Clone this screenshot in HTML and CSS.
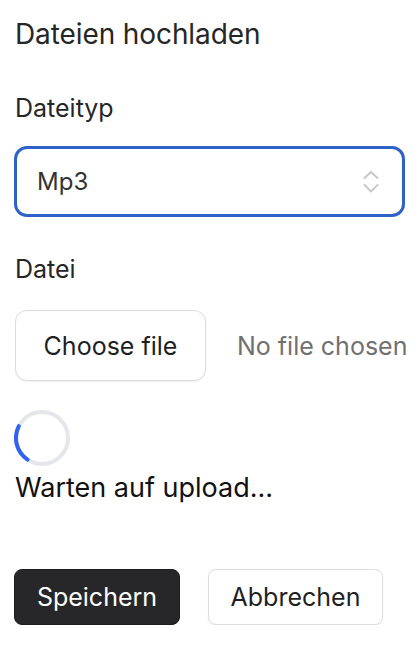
FILE: index.html
```html
<!DOCTYPE html>
<html lang="de">
<head>
<meta charset="utf-8">
<link rel="stylesheet" href="styles.css">
</head>
<body>
<div class="page">
  <h1 class="title">Dateien hochladen</h1>
  <label class="label label-type">Dateityp</label>
  <div class="select">
    <span class="select-value">Mp3</span>
    <svg class="chev" width="16" height="24" viewBox="0 0 16 24"><path d="M1.5 8 L8 2 L14.5 8" fill="none" stroke="#c8c8c8" stroke-width="2" stroke-linecap="round" stroke-linejoin="round"/><path d="M1.5 15 L8 21.5 L14.5 15" fill="none" stroke="#c8c8c8" stroke-width="2" stroke-linecap="round" stroke-linejoin="round"/></svg>
  </div>
  <label class="label label-file">Datei</label>
  <div class="file-row">
    <button class="btn btn-choose">Choose file</button>
    <span class="nofile">No file chosen</span>
  </div>
  <svg class="spinner" width="56" height="56" viewBox="0 0 56 56">
    <circle cx="28" cy="28" r="26" fill="none" stroke="#e5e6ea" stroke-width="4"/>
    <path d="M4.8 16.2 A26 26 0 0 0 13.5 49.6" fill="none" stroke="#2f63f0" stroke-width="4" stroke-linecap="round"/>
  </svg>
  <p class="status">Warten auf upload...</p>
  <div class="actions">
    <button class="btn btn-dark">Speichern</button>
    <button class="btn btn-cancel">Abbrechen</button>
  </div>
</div>
</body>
</html>
```
FILE: styles.css
```css
* { box-sizing: border-box; }
html, body { margin: 0; padding: 0; background: #fff; }
body { font-family: Inter, "Noto Sans", sans-serif; color: #262626; }
.page { padding: 16px 15px 0 14px; display: flex; flex-direction: column; align-items: flex-start; }
.title { margin: 0; font-size: 28px; font-weight: 400; line-height: 36px; color: #262626; padding-left: 1px; letter-spacing: -0.1px; }
.label { display: block; font-size: 25px; line-height: 30px; font-weight: 400; color: #262626; padding-left: 1px; }
.label-type { margin-top: 41px; }
.select { margin-top: 23px; width: 391px; height: 71px; border: 3px solid #2e62c9; border-radius: 13px; display: flex; align-items: center; justify-content: space-between; padding: 0 23px 0 20px; }
.select-value { font-size: 24px; color: #333; }
.chev { display: block; }
.label-file { margin-top: 37px; }
.file-row { margin-top: 26px; display: flex; align-items: center; gap: 31px; white-space: nowrap; }
.btn { font-family: Inter, "Noto Sans", sans-serif; font-size: 25px; cursor: pointer; display: flex; align-items: center; justify-content: center; padding: 0; white-space: nowrap; flex-shrink: 0; }
.btn-choose { background: #fff; color: #1f1f1f; border: 1px solid #dcdcdc; height: 71px; width: 191px; border-radius: 12px; box-shadow: 0 1px 2px rgba(0,0,0,0.06); margin-left: 1px; }
.nofile { font-size: 25px; color: #707070; flex-shrink: 0; }
.spinner { margin-top: 29px; display: block; }
.status { margin: 5px 0 0 1px; font-size: 27px; line-height: 34px; color: #111; white-space: nowrap; }
.actions { margin-top: 64px; display: flex; gap: 28px; }
.btn-dark { background: #27272a; color: #fff; border: 1px solid #1c1c1e; height: 56px; width: 166px; border-radius: 8px; }
.btn-cancel { background: #fff; color: #1f1f1f; border: 1px solid #dcdcdc; height: 56px; width: 175px; border-radius: 8px; box-shadow: 0 1px 2px rgba(0,0,0,0.06); }
```
